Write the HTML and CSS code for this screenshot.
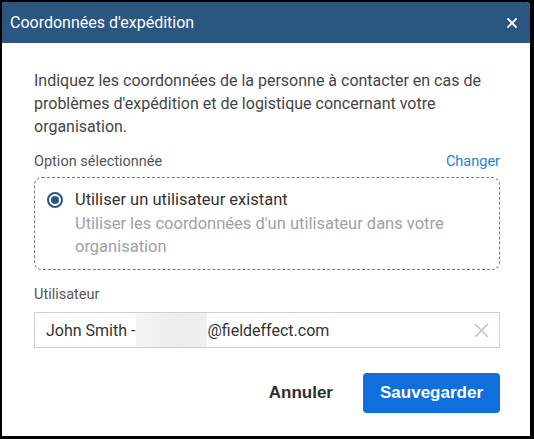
FILE: index.html
```html
<!DOCTYPE html>
<html lang="fr">
<head>
<meta charset="utf-8">
<title>Coordonnées d'expédition</title>
<link rel="stylesheet" href="styles.css">
</head>
<body>
<div class="dialog">
  <div class="header">
    <h1 class="title">Coordonnées d'expédition</h1>
    <button class="close" aria-label="Fermer">
      <svg width="10" height="10" viewBox="0 0 10 10"><path d="M1 1L9 9M9 1L1 9" stroke="#fff" stroke-width="1.8" stroke-linecap="square"/></svg>
    </button>
  </div>
  <div class="body">
    <p class="intro">Indiquez les coordonnées de la personne à contacter en cas de problèmes d'expédition et de logistique concernant votre organisation.</p>
    <div class="label-row">
      <span class="label">Option sélectionnée</span>
      <a class="link" href="#">Changer</a>
    </div>
    <div class="option">
      <span class="radio"><span class="dot"></span></span>
      <div class="option-text">
        <div class="option-title">Utiliser un utilisateur existant</div>
        <div class="option-desc">Utiliser les coordonnées d'un utilisateur dans votre organisation</div>
      </div>
    </div>
    <div class="label user-label">Utilisateur</div>
    <div class="input">
      <span class="val">John Smith -</span><span class="blur"></span><span class="val">@fieldeffect.com</span>
      <span class="clear">
        <svg width="15" height="15" viewBox="0 0 15 15"><path d="M1 1L14 14M14 1L1 14" stroke="#c4c4c4" stroke-width="1.6"/></svg>
      </span>
    </div>
    <div class="actions">
      <button class="btn-cancel">Annuler</button>
      <button class="btn-save">Sauvegarder</button>
    </div>
  </div>
</div>
</body>
</html>
```
FILE: styles.css
```css
html, body {
  margin: 0;
  padding: 0;
  background: #000;
}
body {
  padding: 2px 4px 3px 2px;
  font-family: Roboto, "Liberation Sans", sans-serif;
}
.dialog {
  width: 528px;
  height: 434px;
  background: #fff;
  border-radius: 0 4px 0 0;
  overflow: hidden;
  display: flex;
  flex-direction: column;
}
.header {
  height: 41px;
  flex: none;
  background: #2a5682;
  display: flex;
  align-items: center;
  justify-content: space-between;
  padding: 0 13px 0 8px;
}
.title {
  margin: 0;
  font-size: 16px;
  font-weight: 400;
  color: #fff;
}
.close {
  background: none;
  border: 0;
  padding: 0;
  width: 10px;
  height: 10px;
  display: flex;
}
.body {
  padding: 25.5px 30px 0 32px;
  display: flex;
  flex-direction: column;
}
.intro {
  margin: 0;
  font-size: 16px;
  line-height: 23px;
  color: #454545;
}
.label-row {
  display: flex;
  justify-content: space-between;
  align-items: center;
  margin-top: 13.5px;
  height: 20px;
}
.label {
  font-size: 14.5px;
  color: #555;
}
.link {
  font-size: 14.5px;
  color: #2b7fd5;
  text-decoration: none;
}
.option {
  margin-top: 6px;
  border: 1px dashed #7a7a7a;
  border-radius: 8px;
  padding: 10px 12px 10px 12px;
  display: flex;
  gap: 12px;
  align-items: flex-start;
}
.radio {
  width: 16px;
  height: 16px;
  box-sizing: border-box;
  border: 2px solid #2a5682;
  border-radius: 50%;
  display: flex;
  align-items: center;
  justify-content: center;
  margin-top: 4px;
  flex: none;
}
.dot {
  width: 8px;
  height: 8px;
  border-radius: 50%;
  background: #2a5682;
}
.option-text {
  font-size: 16.5px;
  line-height: 23.5px;
}
.option-title {
  color: #333;
}
.option-desc {
  color: #9da2a8;
}
.user-label {
  margin-top: 16.5px;
  line-height: 18px;
}
.input {
  margin-top: 8px;
  height: 36px;
  flex: none;
  border: 1px solid #d0d0d0;
  box-sizing: border-box;
  display: flex;
  align-items: center;
  padding-left: 11px;
}
.val {
  font-size: 16px;
  color: #333;
}
.blur {
  align-self: stretch;
  width: 71px;
  margin-left: 1px;
  background: linear-gradient(90deg, #f4f4f4, #ececec 60%, #f0f0f0);
}
.clear {
  margin-left: auto;
  margin-right: 10px;
  display: flex;
}
.actions {
  margin-top: 25px;
  display: flex;
  justify-content: flex-end;
  align-items: center;
  gap: 30px;
}
.btn-cancel {
  background: none;
  border: 0;
  padding: 0;
  font-family: "Liberation Sans", Arial, sans-serif;
  font-weight: 700;
  font-size: 17px;
  color: #2e2e2e;
}
.btn-save {
  width: 137px;
  height: 40px;
  border: 0;
  border-radius: 4px;
  background: #0f6fdc;
  color: #fff;
  font-family: "Liberation Sans", Arial, sans-serif;
  font-weight: 700;
  font-size: 17px;
}
```
